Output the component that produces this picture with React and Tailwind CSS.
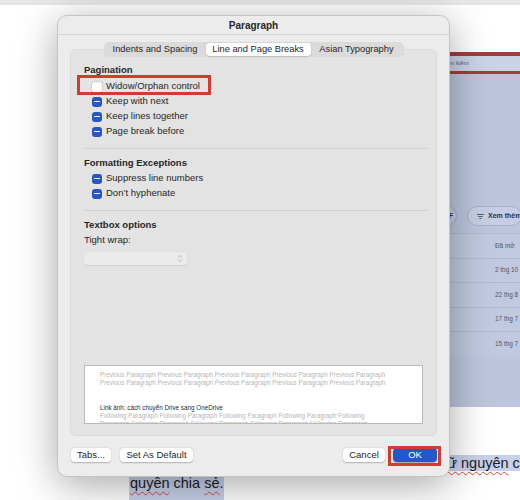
import React from 'react';

// tick box in "mixed" state (blue with a white dash) or empty
function Checkbox({ mixed }) {
  if (!mixed) {
    return <span className="block w-[10px] h-[10px] rounded-[3px] bg-white shadow-[0_0_0_0.5px_rgba(0,0,0,0.18)]" />;
  }
  return (
    <span className="flex w-[10px] h-[10px] items-center justify-center rounded-[3px] bg-[#2755c4]">
      <span className="block w-[6px] h-[1.5px] rounded-full bg-white" />
    </span>
  );
}

function CheckRow({ label, mixed = true, children }) {
  return (
    <div className="relative flex h-[15px] items-center gap-[4px] pl-[8px]">
      <Checkbox mixed={mixed} />
      <span>{label}</span>
      {children}
    </div>
  );
}

function MacButton({ children, className = '' }) {
  return (
    <div className={`flex h-[14px] items-center justify-center rounded-[4px] bg-white shadow-[0_0.5px_1.5px_rgba(0,0,0,0.25)] ${className}`}>
      {children}
    </div>
  );
}

const prevLine = 'Previous Paragraph Previous Paragraph Previous Paragraph Previous Paragraph Previous Paragraph';

const driveRows = ['2 thg 10', '22 thg 8', '17 thg 7', '15 thg 7'];

export default function App() {
  return (
    <div className="relative w-[520px] h-[500px] overflow-hidden bg-white font-['Liberation_Sans',Arial,sans-serif]">
      {/* document window behind the dialog */}
      <div className="h-[5px] bg-[#e7e7e7]" />

      <div className="ml-[440px] mt-[47px] flex h-[355px] flex-col bg-[#bcc5dd]">
        <div className="h-[4px] bg-[#a63a3e]" />
        <div className="h-[15px] bg-[#ccd3e7] pl-[4px] text-[6px] leading-[15px] text-[#5b6276] whitespace-nowrap">Tìm kiếm</div>
        <div className="h-[3px] bg-[#a63a3e]" />

        <div className="mt-[132px] flex h-[20px] items-center gap-[10px] whitespace-nowrap">
          <div className="flex h-[20px] w-[27px] items-center justify-end rounded-r-full border border-l-0 border-[#a9b1c7] bg-[#c7cee3] pr-[3px] text-[6.5px] font-bold text-[#2b3244]">PDF</div>
          <div className="flex h-[20px] w-[70px] items-center gap-[4px] rounded-full border border-[#a9b1c7] bg-[#c7cee3] pl-[9px] text-[7px] font-bold text-[#2b3244]">
            <svg width="7" height="5" viewBox="0 0 7 5" stroke="#3a4256" strokeWidth="0.8">
              <path d="M0 0.5h7M1.2 2.5h4.6M2.4 4.5h2.2" />
            </svg>
            Xem thêm
          </div>
        </div>

        <div className="mt-[7px] flex flex-col bg-[#c0c9df] text-[6.4px] text-[#4f576b] whitespace-nowrap">
          <div className="flex h-[24.5px] items-center border-t border-[#b0b9cf] pl-[55px]">Đã mở</div>
          {driveRows.map((d) => (
            <div key={d} className="flex h-[24.5px] items-center border-t border-[#b0b9cf] pl-[55px]">{d}</div>
          ))}
        </div>
      </div>

      <div className="mt-[46px] h-[20px] pl-[436px] text-[14.5px] leading-[20px] text-[#1d1d1d] whitespace-nowrap">
        <span className="bg-[#c8d1ea]">
          <span className="underline decoration-wavy decoration-[#d6453c] decoration-1 underline-offset-[3px]">giữ nguyên</span> các
        </span>
      </div>
      <div className="ml-[129px] h-[27px] w-[95px] bg-[#c8d1ea] pl-[1px] text-[14.5px] leading-[20px] text-[#1d1d1d] whitespace-nowrap">
        <span className="underline decoration-wavy decoration-[#d6453c] decoration-1 underline-offset-[3px]">quyền</span> chia{' '}
        <span className="underline decoration-wavy decoration-[#d6453c] decoration-1 underline-offset-[3px]">sẻ</span>.
      </div>

      {/* Paragraph sheet */}
      <div className="absolute left-[57px] top-[15px] flex h-[462px] w-[393px] flex-col rounded-[10px] border border-[#c4c4c4] bg-[#ececec] text-[9.5px] text-[#262626] shadow-[0_8px_40px_rgba(0,0,0,0.35)]">
        <div className="flex h-[19px] items-center justify-center border-b border-[#d6d6d6] text-[10px] font-bold">Paragraph</div>

        <div className="relative z-10 mt-[7px] flex justify-center">
          <div className="flex h-[15px] items-center rounded-[5px] bg-[#dbdbdb] p-[1px] text-[9.3px]">
            <div className="flex h-[13px] w-[101px] items-center justify-center">Indents and Spacing</div>
            <div className="flex h-[13px] w-[105px] items-center justify-center rounded-[4px] bg-white shadow-[0_0.5px_1.5px_rgba(0,0,0,0.25)]">Line and Page Breaks</div>
            <div className="flex h-[13px] w-[92px] items-center justify-center">Asian Typography</div>
          </div>
        </div>

        <div className="mx-[12px] -mt-[8px] flex h-[387px] flex-col rounded-[6px] border border-[#dadada] bg-[#e3e3e3] pl-[13px] pt-[13px]">
          <div className="flex h-[15px] items-center font-bold">Pagination</div>
          <div className="mt-[1px]">
            <CheckRow label="Widow/Orphan control" mixed={false}>
              <span className="absolute left-[-7px] top-[-4px] h-[20px] w-[134px] border-[3px] border-[#d23b2f]" />
            </CheckRow>
            <CheckRow label="Keep with next" />
            <CheckRow label="Keep lines together" />
            <CheckRow label="Page break before" />
          </div>

          <div className="mt-[9px] h-px w-[344px] bg-[#d2d2d2]" />

          <div className="mt-[7px] flex h-[15px] items-center font-bold">Formatting Exceptions</div>
          <CheckRow label="Suppress line numbers" />
          <CheckRow label="Don’t hyphenate" />

          <div className="mt-[9px] h-px w-[344px] bg-[#d2d2d2]" />

          <div className="mt-[7px] flex h-[15px] items-center font-bold">Textbox options</div>
          <div className="flex h-[15px] items-center">Tight wrap:</div>
          <div className="mt-[4px] flex h-[13px] w-[103px] items-center justify-end rounded-[4px] bg-[#ebebeb] pr-[4px] shadow-[0_0.5px_1px_rgba(0,0,0,0.08)]">
            <svg width="6" height="9" viewBox="0 0 6 9" fill="none" stroke="#b3b3b3" strokeWidth="0.9" strokeLinecap="round" strokeLinejoin="round">
              <path d="M1.2 3.3 3 1.5 4.8 3.3M1.2 5.7 3 7.5 4.8 5.7" />
            </svg>
          </div>

          <div className="mt-[100px] h-[59px] w-[339px] overflow-hidden border border-[#bababa] bg-white pl-[15px] pt-[5px] text-[6.3px] leading-[8px] whitespace-nowrap">
            <div className="text-[#b5b5b5]">{prevLine}</div>
            <div className="text-[#b5b5b5]">{prevLine}</div>
            <div className="mt-[17px] text-[#2a2a2a]">Link ảnh: cách chuyển Drive sang OneDrive</div>
            <div className="text-[#b5b5b5]">Following Paragraph Following Paragraph Following Paragraph Following Paragraph Following</div>
            <div className="text-[#b5b5b5]">Paragraph Following Paragraph Following Paragraph Following Paragraph Following Paragraph</div>
          </div>
        </div>

        <div className="mt-[12px] flex items-center pl-[13px] pr-[12px]">
          <MacButton className="w-[40px]">Tabs...</MacButton>
          <MacButton className="ml-[9px] w-[73px]">Set As Default</MacButton>
          <MacButton className="ml-auto w-[42px]">Cancel</MacButton>
          <div className="relative ml-[8px]">
            <div className="flex h-[14px] w-[44px] items-center justify-center rounded-[4px] bg-[#2656c8] text-white shadow-[0_0.5px_1.5px_rgba(0,0,0,0.3)]">OK</div>
            <span className="absolute left-[-5px] top-[-2px] h-[20px] w-[53px] border-[3px] border-[#d23b2f]" />
          </div>
        </div>
      </div>
    </div>
  );
}
